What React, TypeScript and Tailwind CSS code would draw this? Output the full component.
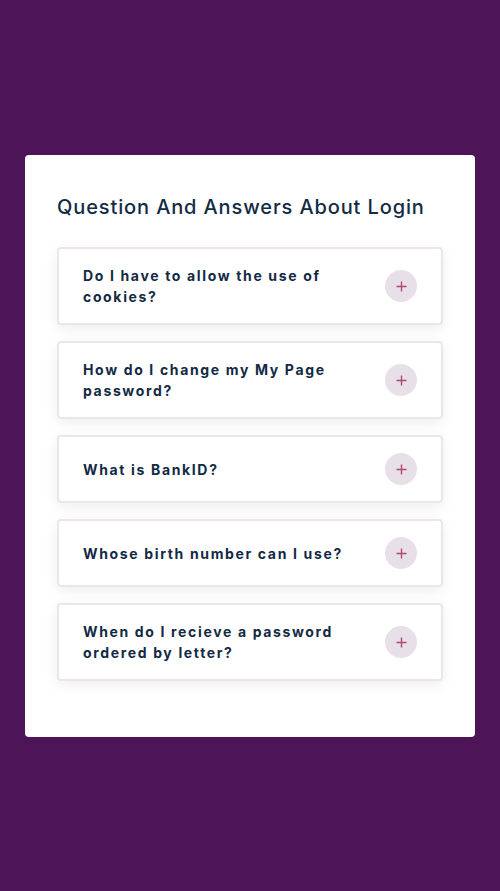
import React from "react";

const questions = [
  "Do I have to allow the use of cookies?",
  "How do I change my My Page password?",
  "What is BankID?",
  "Whose birth number can I use?",
  "When do I recieve a password ordered by letter?",
];

export default function App() {
  return (
    <div
      className="min-h-[891px] w-full bg-[#4d1457] pt-[155px] px-[25px]"
      style={{ fontFamily: "Inter, 'Noto Sans', sans-serif" }}
    >
      <div className="bg-white rounded-[4px] px-8 pt-10 pb-14">
        <h1 className="text-[20px] leading-6 font-medium tracking-[0.88px] text-[#132a44] mb-7">
          Question And Answers About Login
        </h1>
        <div className="flex flex-col gap-4">
          {questions.map((q) => (
            <div
              key={q}
              className="flex items-center justify-between border-2 border-[#ece4ee] rounded-[4px] bg-white pl-6 pr-6 py-4 shadow-[0_4px_14px_rgba(0,0,0,0.07)]"
            >
              <span className="text-[14px] leading-[21px] font-bold tracking-[1.65px] text-[#132a44] max-w-[275px]">
                {q}
              </span>
              <span className="w-8 h-8 rounded-full bg-[#e8e0e8] flex items-center justify-center shrink-0">
                <svg width="11" height="11" viewBox="0 0 11 11">
                  <path d="M5.5 0.5v10M0.5 5.5h10" stroke="#b04870" strokeWidth="1.4" />
                </svg>
              </span>
            </div>
          ))}
        </div>
      </div>
    </div>
  );
}
